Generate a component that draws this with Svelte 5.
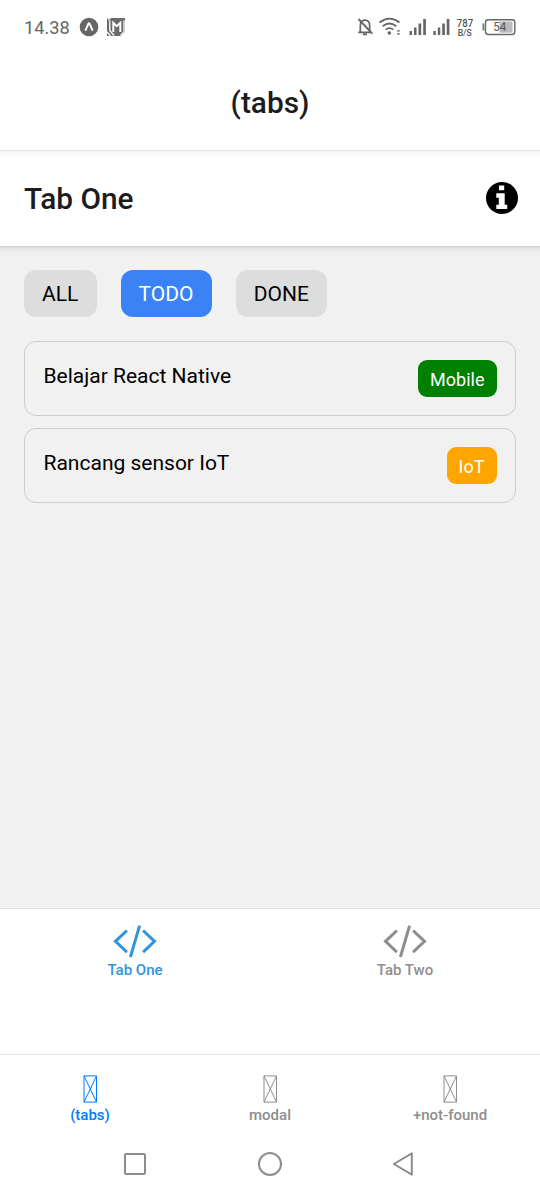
<script>
  const filters = ['ALL', 'TODO', 'DONE'];
  let active = $state('TODO');
  const tasks = [
    { title: 'Belajar React Native', tag: 'Mobile', kind: 'mobile' },
    { title: 'Rancang sensor IoT', tag: 'IoT', kind: 'iot' }
  ];
  const innerTabs = ['Tab One', 'Tab Two'];
  const outerTabs = ['(tabs)', 'modal', '+not-found'];
</script>

<div class="screen">
  <div class="status">
    <span class="clock">14.38</span>
    <svg class="expo" width="20" height="20" viewBox="0 0 20 20">
      <circle cx="10" cy="10" r="9.3" fill="#666" />
      <path d="M6.6 13L9.4 6.8Q10 5.8 10.6 6.8L13.4 13" fill="none" stroke="#fff" stroke-width="1.9" stroke-linecap="round" />
    </svg>
    <svg class="emblem" width="20" height="20" viewBox="0 0 20 20">
      <path d="M5 1H19V15L15 19H1V1.5H2.5V4Z" fill="#6c6c6c" />
      <path d="M3.8 3.5V13.5L8 18.5M1 15L4.5 18.8M18 3.5V15L14.5 18.5" fill="none" stroke="#fff" stroke-width="1.3" />
      <path d="M7.3 15V5.8L10.8 9.2L14.3 5.8V15" fill="none" stroke="#fff" stroke-width="2" />
    </svg>
    <div class="grow"></div>
    <svg class="signals" width="160" height="24" viewBox="357 15 160 24">
      <g fill="none" stroke="#666" stroke-width="1.7">
        <path d="M358.3 32.3H371M360.3 32V26Q360.3 20.2 365 20.2Q369.7 20.2 369.7 26V32M363 34.3H367" />
        <path d="M358.5 19L372.3 33.7" stroke-width="1.9" />
        <path d="M379.5 22.5Q389.5 14.8 399.5 22.5M382.7 26.2Q389.5 20.8 396.3 26.2M385.6 29.6Q389.5 26.7 393.4 29.6" stroke-width="1.8" />
      </g>
      <circle cx="389.3" cy="33" r="1.8" fill="#666" />
      <path d="M397.3 30h2.3v1.8h-2.3zM397.3 33h2.3v1.8h-2.3z" fill="#777" />
      <path d="M409.5 31h2.5v4h-2.5zM414 27.5h2.5v7.5h-2.5zM418.5 23.5h2.7v11.5h-2.7zM423.2 19h2.7v16h-2.7zM433.3 31h2.5v4h-2.5zM437.8 27.5h2.5v7.5h-2.5zM442.2 23.5h2.7v11.5h-2.7zM446.7 19h2.7v16h-2.7z" fill="#666" />
      <text x="465" y="27.4" font-size="10.3" font-weight="500" text-anchor="middle" fill="#555" textLength="16.3" lengthAdjust="spacingAndGlyphs">787</text>
      <text x="464.7" y="36" font-size="8.6" font-weight="500" text-anchor="middle" fill="#555" textLength="14" lengthAdjust="spacingAndGlyphs">B/S</text>
      <rect x="485.5" y="19.7" width="29.3" height="14.8" rx="2.7" fill="#fff" stroke="#666" stroke-width="1.4" />
      <rect x="499.5" y="21.5" width="13" height="11.2" fill="#bbb" />
      <path d="M483.4 23.5V30.5" stroke="#777" stroke-width="1.8" />
      <text x="499.8" y="31.4" font-size="12" text-anchor="middle" fill="#555" textLength="13" lengthAdjust="spacingAndGlyphs">54</text>
    </svg>
  </div>

  <header class="outer"><h1>(tabs)</h1></header>

  <header class="inner">
    <h2>Tab One</h2>
    <svg width="34" height="34" viewBox="0 0 34 34">
      <circle cx="17" cy="17" r="16" fill="#000" />
      <path d="M14 4.4H19.2V9.2H14ZM11.3 12.3H19.7V23.7H22.2V28H11.3V23.7H13.8V16.7H11.3Z" fill="#fff" />
    </svg>
  </header>

  <main>
    <div class="chips">
      {#each filters as f}
        <button class:active={f === active} onclick={() => (active = f)}><span>{f}</span></button>
      {/each}
    </div>
    <div class="list">
      {#each tasks as task}
        <article>
          <span class="name">{task.title}</span>
          <span class="tag {task.kind}">{task.tag}</span>
        </article>
      {/each}
    </div>
  </main>

  <nav class="tabs code">
    {#each innerTabs as t, i}
      <div class="tab" class:on={i === 0}>
        <svg width="46" height="34" viewBox="0 0 46 34" fill="none" stroke="currentColor" stroke-width="3">
          <path d="M14.9 6.5L3.5 17.3L14.9 28.1M31.1 6.5L42.5 17.3L31.1 28.1M27.6 1.7L18.4 33" />
        </svg>
        <span>{t}</span>
      </div>
    {/each}
  </nav>

  <nav class="tabs routes">
    {#each outerTabs as t, i}
      <div class="tab" class:on={i === 0}>
        <svg width="14" height="28" viewBox="0 0 14 28" fill="none" stroke="currentColor" stroke-width="1">
          <path d="M1 0.9H13.5V27.1H1ZM1 0.9L13.5 27.1M13.5 0.9L1 27.1" />
        </svg>
        <span>{t}</span>
      </div>
    {/each}
  </nav>

  <div class="system">
    <svg width="24" height="26" viewBox="0 0 24 26"><rect x="2" y="3" width="20" height="20" rx="1" /></svg>
    <svg width="26" height="26" viewBox="0 0 26 26"><circle cx="13" cy="13" r="11" /></svg>
    <svg width="24" height="26" viewBox="0 0 24 26"><path d="M18.8 2.3V23.7L0.9 13Z" /></svg>
  </div>
</div>

<style>
  :global(body) { margin: 0; background: #fff; }
  .screen { width: 540px; height: 1200px; display: flex; flex-direction: column; background: #fff; font-family: Roboto, sans-serif; color: #000; overflow: hidden; }
  .status { height: 54px; flex: none; display: flex; align-items: center; padding: 0 23px 0 24px; box-sizing: border-box; color: #666; }
  .clock { font-size: 18.2px; line-height: 24px; margin-top: 2px; width: 54.5px; }
  .emblem { margin-left: 7px; }
  .grow { flex: 1; }
  .outer { height: 96px; flex: none; display: flex; align-items: center; justify-content: center; }
  h1, h2 { margin: 0; font-weight: 500; font-size: 29.8px; line-height: 36px; color: #1c1c1e; }
  h1 { margin-top: 1px; }
  .inner { height: 96px; flex: none; box-sizing: border-box; display: flex; align-items: center; justify-content: space-between; padding: 0 21.5px 0 24px; border-top: 1px solid #e3e3e3; background: linear-gradient(#f4f4f4, #fff 7px); }
  .inner svg { margin-bottom: 1px; }
  main { flex: 1; padding: 24px; background: linear-gradient(#cfcfcf, #e3e3e3 2px, #ececec 5px, #f1f1f1 10px); }
  .chips { display: flex; gap: 24px; }
  button { border: 0; margin: 0; padding: 0 18.1px; height: 46.5px; border-radius: 12px; background: #ddd; color: #000; font: 400 21px/46px Roboto, sans-serif; }
  button span { position: relative; top: 1px; }
  button.active { background: #3b82f6; color: #fff; }
  .list { margin-top: 24px; display: flex; flex-direction: column; gap: 12.5px; }
  article { height: 75px; box-sizing: border-box; border: 1.5px solid #ccc; border-radius: 12px; padding: 18px 18.5px; display: flex; justify-content: space-between; align-items: flex-start; }
  .name { font-size: 21px; line-height: 33px; }
  .tag { height: 37px; border-radius: 9px; padding: 0 12px; color: #fff; font-size: 18px; line-height: 39px; }
  .mobile { background: #008000; }
  .iot { background: #ffa500; }
  .tabs { display: flex; flex: none; box-sizing: border-box; color: #8e8e8f; background: #fff; }
  .tab { flex: 1; display: flex; flex-direction: column; align-items: center; }
  .tab span { font-size: 15px; font-weight: 500; line-height: 18px; }
  .code { height: 146px; border-top: 1px solid #e0e0e0; padding-top: 15px; }
  .code .tab span { margin-top: 3px; }
  .code .on { color: #2f95dc; }
  .routes { height: 81px; border-top: 1px solid #e3e3e3; padding-top: 20px; }
  .routes .tab span { margin-top: 3px; }
  .routes .on { color: #007aff; }
  .system { flex: none; height: 65px; display: grid; grid-template-columns: 135px 135px 135px; justify-content: center; justify-items: center; padding-top: 16px; box-sizing: border-box; }
  .system svg { fill: none; stroke: #8d8d8d; stroke-width: 2; stroke-linejoin: round; }
</style>
